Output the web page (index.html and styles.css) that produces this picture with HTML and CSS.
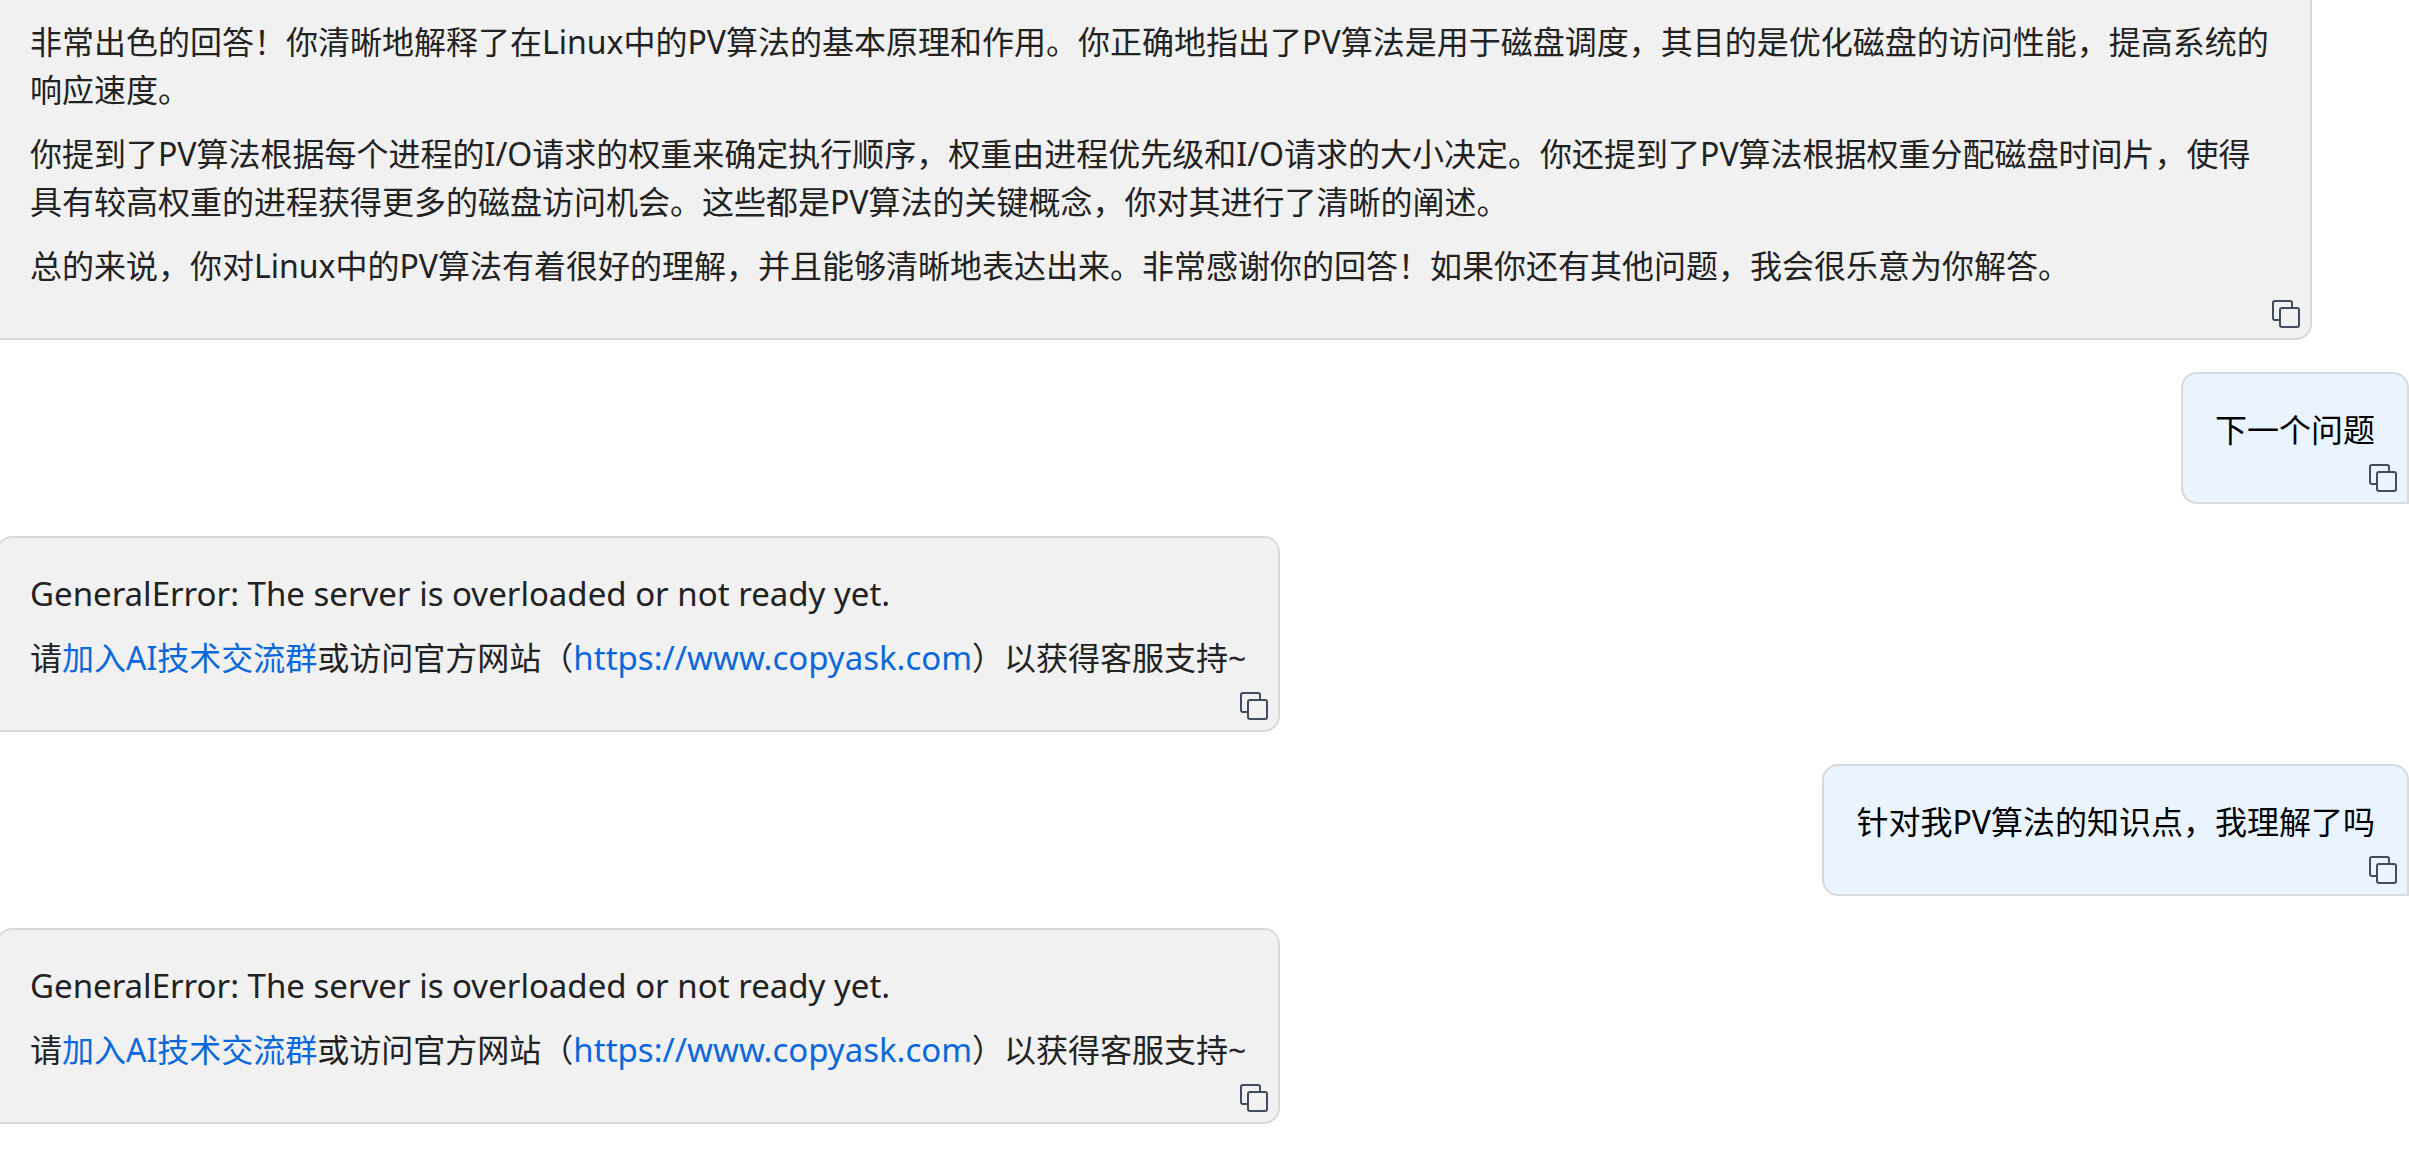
FILE: index.html
```html
<!DOCTYPE html>
<html lang="zh-CN">
<head>
    <meta charset="UTF-8">
    <meta name="viewport" content="width=device-width, initial-scale=1.0">
    <title>CopyAsk</title>
    <link rel="stylesheet" href="styles.css">
</head>
<body>
    <svg class="sprite" aria-hidden="true">
        <symbol id="copyIcon" viewBox="0 0 28 28">
            <path d="M7 20H3a2 2 0 0 1-2-2V3a2 2 0 0 1 2-2h15a2 2 0 0 1 2 2v4"/>
            <rect x="8" y="8" width="19" height="19" rx="2"/>
        </symbol>
    </svg>
    <main class="chat">
        <div class="message answer">
            <p>非常出色的回答！你清晰地解释了在Linux中的PV算法的基本原理和作用。你正确地指出了PV算法是用于磁盘调度，其目的是优化磁盘的访问性能，提高系统的响应速度。</p>
            <p>你提到了PV算法根据每个进程的I/O请求的权重来确定执行顺序，权重由进程优先级和I/O请求的大小决定。你还提到了PV算法根据权重分配磁盘时间片，使得具有较高权重的进程获得更多的磁盘访问机会。这些都是PV算法的关键概念，你对其进行了清晰的阐述。</p>
            <p>总的来说，你对Linux中的PV算法有着很好的理解，并且能够清晰地表达出来。非常感谢你的回答！如果你还有其他问题，我会很乐意为你解答。</p>
            <button type="button" class="copy" aria-label="复制"><svg><use href="#copyIcon"/></svg></button>
        </div>
        <div class="message question">
            <p>下一个问题</p>
            <button type="button" class="copy" aria-label="复制"><svg><use href="#copyIcon"/></svg></button>
        </div>
        <div class="message answer">
            <p lang="en">GeneralError: The server is overloaded or not ready yet.</p>
            <p>请<a href="#group">加入AI技术交流群</a>或访问官方网站（<a href="https://www.copyask.com" lang="en">https://www.copyask.com</a>）以获得客服支持~</p>
            <button type="button" class="copy" aria-label="复制"><svg><use href="#copyIcon"/></svg></button>
        </div>
        <div class="message question">
            <p>针对我PV算法的知识点，我理解了吗</p>
            <button type="button" class="copy" aria-label="复制"><svg><use href="#copyIcon"/></svg></button>
        </div>
        <div class="message answer">
            <p lang="en">GeneralError: The server is overloaded or not ready yet.</p>
            <p>请<a href="#group">加入AI技术交流群</a>或访问官方网站（<a href="https://www.copyask.com" lang="en">https://www.copyask.com</a>）以获得客服支持~</p>
            <button type="button" class="copy" aria-label="复制"><svg><use href="#copyIcon"/></svg></button>
        </div>
    </main>
</body>
</html>
```
FILE: styles.css
```css
body {
    font-family: "Noto Sans", "Noto Sans CJK SC", sans-serif;
    font-size: 32px;
    line-height: 48px;
    margin: 0;
    background: #fff;
    overflow: hidden;
}

.sprite {
    display: none;
}

/* The log is scrolled a little past the first message */
.chat {
    display: flex;
    flex-direction: column;
    gap: 32px;
    margin: -16px 0 0 -4px;
}

.message {
    position: relative;
    box-sizing: border-box;
    max-width: 96%;
    padding: 32px 32px 48px;
    border: 2px solid #d9d9d9;
    border-radius: 16px;
}

.message p {
    margin: 0 0 16px;
}

.message p:last-of-type {
    margin-bottom: 0;
}

/* English runs slightly larger than the Chinese around it */
.message [lang="en"] {
    font-size: 33px;
}

.message a {
    color: #0969da;
    text-decoration: none;
}

.message a:hover {
    text-decoration: underline;
}

.answer {
    align-self: flex-start;
    background: #f1f1f1;
    color: #222;
    border-bottom-left-radius: 0;
}

.question {
    align-self: flex-end;
    background: #eaf4ff;
    color: #000;
    border-bottom-right-radius: 0;
}

.copy {
    position: absolute;
    right: 10px;
    bottom: 10px;
    width: 28px;
    height: 28px;
    padding: 0;
    border: 0;
    background: none;
    cursor: pointer;
}

.copy svg {
    display: block;
    width: 28px;
    height: 28px;
    fill: none;
    stroke: #434c5e;
    stroke-width: 2;
}

.message a[lang="en"] {
    line-height: 1;
}
```
